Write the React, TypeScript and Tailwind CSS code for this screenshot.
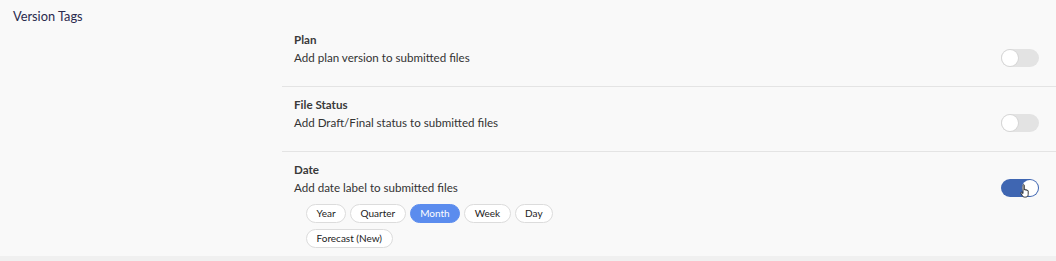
import React from "react";

function Toggle({ on }: { on: boolean }) {
  return on ? (
    <div className="relative h-[18px] w-[38px] shrink-0 rounded-full bg-[#3f66b2]">
      <div className="absolute right-[1px] top-[1px] h-[16px] w-[16px] rounded-full bg-white" />
      <svg className="absolute left-[19px] top-[5px]" width="12" height="15" viewBox="0 0 12 15">
        <path
          d="M3 1.2c0-.7 1.3-.7 1.3 0V6l.3-.1c0-.7 1.2-.7 1.2 0v.4c0-.7 1.2-.7 1.2 0v.5c0-.6 1.2-.6 1.2.1v3.4c0 1.6-1 2.8-2.6 2.8H4.4C3.4 13.1 2.8 12.4 2.3 11.6L.9 9.2c-.4-.6.4-1.3 1-.7L3 9.6z"
          fill="#fff"
          stroke="#222"
          strokeWidth="0.9"
          strokeLinejoin="round"
        />
      </svg>
    </div>
  ) : (
    <div className="relative h-[18px] w-[38px] shrink-0 rounded-full bg-[#e3e3e3]">
      <div className="absolute left-[1px] top-[1px] h-[16px] w-[16px] rounded-full bg-white shadow-[0_0_0_1px_#d6d6d6]" />
    </div>
  );
}

function Pill({ label, active }: { label: string; active?: boolean }) {
  return (
    <div
      className={
        active
          ? "flex h-[19px] items-center rounded-full border border-[#5b8cee] bg-[#5b8cee] px-[9.5px] text-[10px] text-white"
          : "flex h-[19px] items-center rounded-full border border-[#dcdcdc] bg-white px-[9.5px] text-[10px] text-[#222]"
      }
    >
      {label}
    </div>
  );
}

function Row({
  title,
  desc,
  on,
  children,
  last,
}: {
  title: string;
  desc: string;
  on: boolean;
  children?: React.ReactNode;
  last?: boolean;
}) {
  return (
    <div className={last ? "pl-[12px] pr-[17px] pt-[9px] pb-[9px]" : "border-b border-[#e4e4e4] pl-[12px] pr-[17px] pt-[9px] pb-[19px]"}>
      <div className="h-[18px] text-[11.6px] font-bold leading-[18px] text-[#3a3a3a]">{title}</div>
      <div className="flex h-[18px] items-center justify-between">
        <span className="text-[11.6px] leading-[18px] text-[#333]">{desc}</span>
        <Toggle on={on} />
      </div>
      {children}
    </div>
  );
}

export default function App() {
  return (
    <div className="h-[261px] w-[1056px] overflow-hidden bg-[#f0f0f0] font-['Lato','Noto_Sans',sans-serif]">
      <div className="flex h-[256px] bg-[#f9f9f9]">
        <div className="w-[282px] shrink-0 pl-[13px] pt-[7px]">
          <div className="text-[12.8px] leading-[18px] text-[#2a2a4e]">Version Tags</div>
        </div>
        <div className="flex-1 pt-[22px]">
          <Row title="Plan" desc="Add plan version to submitted files" on={false} />
          <Row title="File Status" desc="Add Draft/Final status to submitted files" on={false} />
          <Row title="Date" desc="Add date label to submitted files" on={true} last>
            <div className="mt-[7px] flex flex-col gap-[6px] pl-[12px]">
              <div className="flex gap-[4px]">
                <Pill label="Year" />
                <Pill label="Quarter" />
                <Pill label="Month" active />
                <Pill label="Week" />
                <Pill label="Day" />
              </div>
              <div className="flex">
                <Pill label="Forecast (New)" />
              </div>
            </div>
          </Row>
        </div>
      </div>
    </div>
  );
}
